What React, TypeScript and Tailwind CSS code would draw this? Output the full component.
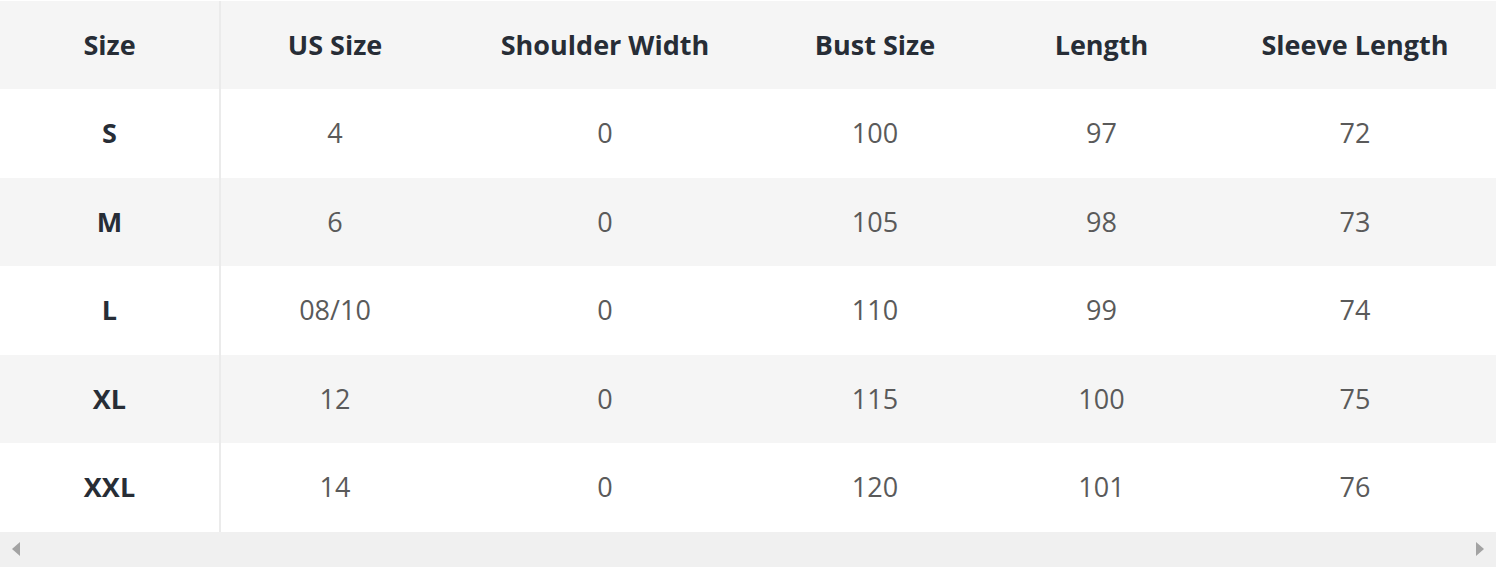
import React from "react";

const headers = ["Size", "US Size", "Shoulder Width", "Bust Size", "Length", "Sleeve Length"];
const rows = [
  ["S", "4", "0", "100", "97", "72"],
  ["M", "6", "0", "105", "98", "73"],
  ["L", "08/10", "0", "110", "99", "74"],
  ["XL", "12", "0", "115", "100", "75"],
  ["XXL", "14", "0", "120", "101", "76"],
];
const widths = ["w-[221px]", "w-[228px]", "w-[312px]", "w-[228px]", "w-[225px]", "w-[282px]"];

export default function App() {
  return (
    <div className="w-[1500px] h-[571px] bg-white pt-px" style={{ fontFamily: '"Open Sans", "Noto Sans", sans-serif' }}>
      <div className="w-[1496px]">
        <div className="flex h-[88px] bg-[#f5f5f5]">
          {headers.map((h, i) => (
            <div
              key={h}
              className={`${widths[i]} flex items-center justify-center text-[27px] font-bold text-[#272d36] ${i === 0 ? "border-r-2 border-[#ebebeb]" : ""}`}
            >
              {h}
            </div>
          ))}
        </div>
        {rows.map((r, ri) => (
          <div key={ri} className={`flex h-[88.6px] ${ri % 2 === 1 ? "bg-[#f5f5f5]" : "bg-white"}`}>
            {r.map((c, ci) => (
              <div
                key={ci}
                className={`${widths[ci]} flex items-center justify-center text-[27px] ${
                  ci === 0 ? "font-bold text-[#272d36] border-r-2 border-[#ebebeb]" : "text-[#5a5a5a]"
                }`}
              >
                {c}
              </div>
            ))}
          </div>
        ))}
        <div className="flex h-[35px] items-center justify-between bg-[#f0f0f0] pl-[11px] pr-[11px]">
          <svg className="block w-[10px] h-[16px]" width="10" height="16" viewBox="0 0 10 16">
            <polygon points="9,1 9,15 1,8" fill="#a3a3a3" />
          </svg>
          <svg className="block w-[10px] h-[16px]" width="10" height="16" viewBox="0 0 10 16">
            <polygon points="1,1 1,15 9,8" fill="#a3a3a3" />
          </svg>
        </div>
      </div>
    </div>
  );
}
